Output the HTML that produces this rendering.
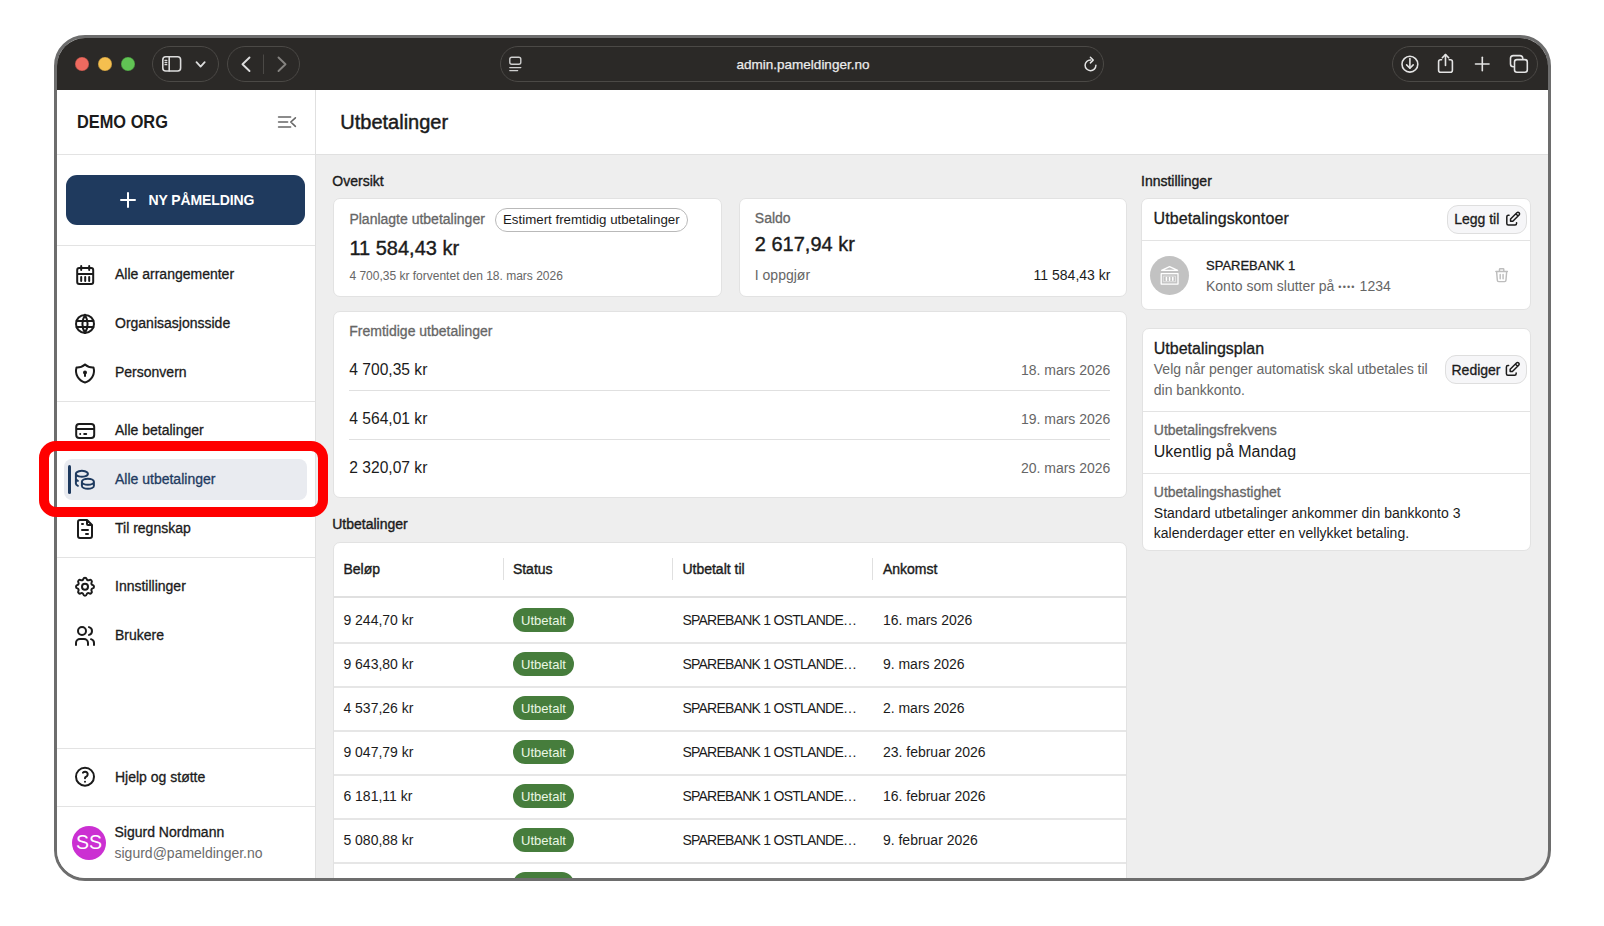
<!DOCTYPE html>
<html><head><meta charset="utf-8">
<style>
*{box-sizing:border-box;margin:0;padding:0}
html,body{width:1604px;height:926px;overflow:hidden;background:#fff;font-family:"Liberation Sans",sans-serif;color:#1f1f1f}
.a{position:absolute;white-space:nowrap;line-height:1}
#win{position:absolute;left:54px;top:35px;width:1497px;height:846px;border:3px solid #6d6d6d;border-radius:31px;overflow:hidden;background:#eeeeee}
#pg{position:absolute;left:-57px;top:-38px;width:1604px;height:926px}
.b{position:absolute}
.hr{position:absolute;left:57px;width:258px;height:1px;background:#e3e3e3}
.card{position:absolute;background:#fff;border:1px solid #e2e2e2;border-radius:7px}
</style></head><body>
<div id="win"><div id="pg">
<div class="b" style="left:57px;top:38px;width:1491px;height:52px;background:#2b2927"></div>
<div class="b" style="left:75px;top:57px;width:14px;height:14px;border-radius:50%;background:#ee6a5f;box-shadow:inset 0 0 0 0.6px rgba(0,0,0,0.22)"></div>
<div class="b" style="left:98px;top:57px;width:14px;height:14px;border-radius:50%;background:#f5bf4f;box-shadow:inset 0 0 0 0.6px rgba(0,0,0,0.22)"></div>
<div class="b" style="left:121px;top:57px;width:14px;height:14px;border-radius:50%;background:#61c454;box-shadow:inset 0 0 0 0.6px rgba(0,0,0,0.22)"></div>
  <svg class="b" style="left:0;top:0" width="1604" height="92" viewBox="0 0 1604 92" fill="none">
    <g stroke="#4b4946" stroke-width="1">
      <rect x="152.5" y="46.5" width="66" height="35" rx="17.5"/>
      <rect x="227.5" y="46.5" width="72" height="35" rx="17.5"/>
      <rect x="500.5" y="46.5" width="603" height="35" rx="17.5"/>
      <rect x="1392.5" y="46.5" width="145" height="35" rx="17.5"/>
    </g>
    <g stroke="#dcdcdc" stroke-width="1.6" stroke-linecap="round" stroke-linejoin="round">
      <rect x="162.8" y="56.8" width="17.8" height="14.2" rx="3"/>
      <line x1="169.2" y1="57" x2="169.2" y2="71"/>
      <path d="M196.5 62.2 L200.6 66.6 L204.7 62.2" stroke-width="1.8"/>
      <path d="M249.5 57.5 L242.5 64.3 L249.5 71" stroke-width="1.9"/>
    </g>
    <g stroke="#dcdcdc" stroke-width="1.3" stroke-linecap="round">
      <line x1="165" y1="60.5" x2="166.8" y2="60.5"/>
      <line x1="165" y1="62.6" x2="166.8" y2="62.6"/>
      <line x1="165" y1="64.7" x2="166.8" y2="64.7"/>
    </g>
    <line x1="263.5" y1="54.5" x2="263.5" y2="74" stroke="#4b4946" stroke-width="1"/>
    <path d="M278.5 57.5 L285.5 64.3 L278.5 71" stroke="#858380" stroke-width="1.9" stroke-linecap="round" stroke-linejoin="round"/>
    <!-- address icon -->
    <g stroke="#cfcfcf" stroke-width="1.4" stroke-linecap="round">
      <rect x="509.8" y="57.3" width="11" height="7" rx="2"/>
      <line x1="509.8" y1="67.6" x2="520.8" y2="67.6"/>
      <line x1="509.8" y1="70.6" x2="517.6" y2="70.6"/>
    </g>
    <!-- reload -->
    <g stroke="#e4e4e4" stroke-width="1.5" stroke-linecap="round" stroke-linejoin="round">
      <path d="M1090.6 59.9 A5.4 5.4 0 1 0 1095.9 65.3"/>
      <path d="M1090.4 57.3 L1093.2 60.1 L1090.4 62.9"/>
    </g>
    <!-- right icons -->
    <g stroke="#e4e4e4" stroke-width="1.6" stroke-linecap="round" stroke-linejoin="round">
      <circle cx="1409.9" cy="64.2" r="7.9"/>
      <line x1="1409.9" y1="58.5" x2="1409.9" y2="68"/>
      <path d="M1406.6 64.9 L1409.9 68.2 L1413.2 64.9"/>
      <path d="M1441.6 59.8 L1440.6 59.8 Q1438.6 59.8 1438.6 61.8 L1438.6 70.2 Q1438.6 72.2 1440.6 72.2 L1450.4 72.2 Q1452.4 72.2 1452.4 70.2 L1452.4 61.8 Q1452.4 59.8 1450.4 59.8 L1449.2 59.8"/>
      <line x1="1445.5" y1="54.6" x2="1445.5" y2="65.4"/>
      <path d="M1442.3 57.8 L1445.5 54.6 L1448.7 57.8"/>
      <line x1="1475.5" y1="64" x2="1489" y2="64"/>
      <line x1="1482.3" y1="57.2" x2="1482.3" y2="70.8"/>
      <path d="M1513.5 66.8 Q1510.5 66.8 1510.5 64 L1510.5 58.3 Q1510.5 55.6 1513.3 55.6 L1520 55.6 Q1522.6 55.6 1522.8 58.5"/>
      <rect x="1514.5" y="59.6" width="12.8" height="12.6" rx="2.4"/>
    </g>
  </svg>
  <div class="a" style="left:700px;width:206px;text-align:center;top:58px;font-size:13.5px;color:#ececec;letter-spacing:0;-webkit-text-stroke:0.25px currentColor">admin.pameldinger.no</div>
<div class="b" style="left:57px;top:90px;width:259px;height:800px;background:#fff;border-right:1px solid #e0e0e0"></div>
<div class="a" style="left:76.9px;top:114.29px;font-size:17.5px;font-weight:bold;color:#1b1b1b;transform:scaleX(0.935);transform-origin:0 0">DEMO ORG</div>
<div class="b" style="left:64px;top:459px;width:243px;height:41px;border-radius:8px;background:#e9ebf0"></div>
<div class="b" style="left:68px;top:465px;width:3px;height:29px;border-radius:2px;background:#1e3a5f"></div>
<svg class="b" style="left:0;top:0" width="330" height="900" fill="none" stroke-linecap="round" stroke-linejoin="round">
  <g stroke="#666" stroke-width="1.6"><path d="M278.6 117h12 M278.6 122h9 M278.6 127h12 M295.4 117.8 L290.8 122 L295.4 126.3"/></g>
  <g stroke="#1b1b1b" stroke-width="2" transform="translate(73.2 263)"><path d="M4 7a2 2 0 0 1 2 -2h12a2 2 0 0 1 2 2v12a2 2 0 0 1 -2 2h-12a2 2 0 0 1 -2 -2v-12z M16 3v4 M8 3v4 M4 11h16 M8 14v4 M12 14v4 M16 14v4"/></g>
  <g stroke="#1b1b1b" stroke-width="2" transform="translate(73 311.9)"><circle cx="12" cy="12" r="9"/><path d="M3.6 9h16.8 M3.6 15h16.8 M12 3 Q6.8 12 12 21 Q17.2 12 12 3"/></g>
  <g stroke="#1b1b1b" stroke-width="2" transform="translate(73 361.5)"><path d="M12 3a12 12 0 0 0 8.5 3a12 12 0 0 1 -8.5 15a12 12 0 0 1 -8.5 -15a12 12 0 0 0 8.5 -3"/><circle cx="12" cy="11" r="1" fill="#1b1b1b"/><path d="M12 12l0 2.5"/></g>
  <g stroke="#1b1b1b" stroke-width="2" transform="translate(73.2 419)"><path d="M3 8a3 3 0 0 1 3 -3h12a3 3 0 0 1 3 3v8a3 3 0 0 1 -3 3h-12a3 3 0 0 1 -3 -3z M3 10l18 0 M7 15l.01 0 M11 15l2 0"/></g>
  <g stroke="#1e3a5f" stroke-width="2" transform="translate(72.9 467.8)"><path d="M9 14c0 1.657 2.686 3 6 3s6 -1.343 6 -3s-2.686 -3 -6 -3s-6 1.343 -6 3z M9 14v4c0 1.656 2.686 3 6 3s6 -1.344 6 -3v-4 M3 6c0 1.072 1.144 2.062 3 2.598s4.144 .536 6 0c1.856 -.536 3 -1.526 3 -2.598c0 -1.072 -1.144 -2.062 -3 -2.598s-4.144 -.536 -6 0c-1.856 .536 -3 1.526 -3 2.598z M3 6v10c0 .888 .772 1.45 2 2 M3 11c0 .888 .772 1.45 2 2"/></g>
  <g stroke="#1b1b1b" stroke-width="2" transform="translate(73 517)"><path d="M14 3v4a1 1 0 0 0 1 1h4 M17 21h-10a2 2 0 0 1 -2 -2v-14a2 2 0 0 1 2 -2h7l5 5v11a2 2 0 0 1 -2 2z M9 7l1 0 M9 13l6 0 M13 17l2 0"/></g>
  <g stroke="#1b1b1b" stroke-width="2" transform="translate(73 574.7)"><path d="M10.325 4.317c.426 -1.756 2.924 -1.756 3.35 0a1.724 1.724 0 0 0 2.573 1.066c1.543 -.94 3.31 .826 2.37 2.37a1.724 1.724 0 0 0 1.065 2.572c1.756 .426 1.756 2.924 0 3.35a1.724 1.724 0 0 0 -1.066 2.573c.94 1.543 -.826 3.31 -2.37 2.37a1.724 1.724 0 0 0 -2.572 1.065c-.426 1.756 -2.924 1.756 -3.35 0a1.724 1.724 0 0 0 -2.573 -1.066c-1.543 .94 -3.31 -.826 -2.37 -2.37a1.724 1.724 0 0 0 -1.065 -2.572c-1.756 -.426 -1.756 -2.924 0 -3.35a1.724 1.724 0 0 0 1.066 -2.573c-.94 -1.543 .826 -3.31 2.37 -2.37c1 .608 2.296 .07 2.572 -1.065z"/><circle cx="12" cy="12" r="3"/></g>
  <g stroke="#1b1b1b" stroke-width="2" transform="translate(73 624)"><path d="M5 7a4 4 0 1 0 8 0a4 4 0 1 0 -8 0 M3 21v-2a4 4 0 0 1 4 -4h4a4 4 0 0 1 4 4v2 M16 3.13a4 4 0 0 1 0 7.75 M21 21v-2a4 4 0 0 0 -3 -3.85"/></g>
  <g stroke="#1b1b1b" stroke-width="2" transform="translate(73 764.7)"><circle cx="12" cy="12" r="9"/><path d="M12 17l0 .01 M12 13.5a1.5 1.5 0 0 1 1 -1.5a2.6 2.6 0 1 0 -3 -4"/></g>
</svg>
<div class="b" style="left:66px;top:175px;width:239px;height:50px;border-radius:11px;background:#1f3a5e"></div>
<svg class="b" style="left:116px;top:188px" width="24" height="24" fill="none" stroke="#fff" stroke-width="2" stroke-linecap="round"><path d="M12 5l0 14 M5 12l14 0"/></svg>
<div class="a" style="left:148.4px;top:193.35px;font-size:14px;font-weight:bold;color:#fff;letter-spacing:-0.1px">NY PÅMELDING</div>
<div class="hr" style="top:154px"></div>
<div class="hr" style="top:245px"></div>
<div class="hr" style="top:401px"></div>
<div class="hr" style="top:557px"></div>
<div class="hr" style="top:748px"></div>
<div class="hr" style="top:806px"></div>
<div class="a" style="left:115px;top:267.45px;font-size:14px;-webkit-text-stroke:0.3px currentColor;color:#1b1b1b">Alle arrangementer</div>
<div class="a" style="left:115px;top:316.25px;font-size:14px;-webkit-text-stroke:0.3px currentColor;color:#1b1b1b">Organisasjonsside</div>
<div class="a" style="left:115px;top:365.15px;font-size:14px;-webkit-text-stroke:0.3px currentColor;color:#1b1b1b">Personvern</div>
<div class="a" style="left:115px;top:422.95px;font-size:14px;-webkit-text-stroke:0.3px currentColor;color:#1b1b1b">Alle betalinger</div>
<div class="a" style="left:115px;top:472.25px;font-size:14px;-webkit-text-stroke:0.3px currentColor;color:#1e3a5f">Alle utbetalinger</div>
<div class="a" style="left:115px;top:521.15px;font-size:14px;-webkit-text-stroke:0.3px currentColor;color:#1b1b1b">Til regnskap</div>
<div class="a" style="left:115px;top:579.15px;font-size:14px;-webkit-text-stroke:0.3px currentColor;color:#1b1b1b">Innstillinger</div>
<div class="a" style="left:115px;top:628.05px;font-size:14px;-webkit-text-stroke:0.3px currentColor;color:#1b1b1b">Brukere</div>
<div class="a" style="left:115px;top:769.95px;font-size:14px;-webkit-text-stroke:0.3px currentColor;color:#1b1b1b">Hjelp og støtte</div>
<div class="b" style="left:72px;top:826px;width:34px;height:34px;border-radius:50%;background:#cb30d2"></div>
<div class="a" style="left:72.0px;width:34px;text-align:center;top:833.29px;font-size:19.5px;color:#fff">SS</div>
<div class="a" style="left:114.5px;top:824.95px;font-size:14px;-webkit-text-stroke:0.3px currentColor;color:#1b1b1b">Sigurd Nordmann</div>
<div class="a" style="left:114.5px;top:846.45px;font-size:14px;color:#6b6b6b">sigurd@pameldinger.no</div>
<div class="b" style="left:316px;top:90px;width:1240px;height:65px;background:#fff;border-bottom:1px solid #e0e0e0"></div>
<div class="a" style="left:340.3px;top:111.97px;font-size:20px;color:#1b1b1b;-webkit-text-stroke:0.45px currentColor">Utbetalinger</div>
<div class="a" style="left:332.3px;top:174.15px;font-size:14px;-webkit-text-stroke:0.38px currentColor;color:#1b1b1b">Oversikt</div>
<div class="card" style="left:333px;top:198px;width:389px;height:99px"></div>
<div class="a" style="left:349.4px;top:212.15px;font-size:14px;-webkit-text-stroke:0.3px currentColor;color:#666666">Planlagte utbetalinger</div>
<div class="b" style="left:495px;top:208px;width:193px;height:24px;border:1px solid #b9b9b9;border-radius:12px"></div>
<div class="a" style="left:503px;top:212.74px;font-size:13.3px;color:#1b1b1b">Estimert fremtidig utbetalinger</div>
<div class="a" style="left:349.4px;top:237.97px;font-size:20px;-webkit-text-stroke:0.38px currentColor;color:#1b1b1b">11 584,43 kr</div>
<div class="a" style="left:349.4px;top:270.14px;font-size:12px;color:#666666">4 700,35 kr forventet den 18. mars 2026</div>
<div class="card" style="left:739px;top:198px;width:388px;height:99px"></div>
<div class="a" style="left:754.8px;top:210.65px;font-size:14px;-webkit-text-stroke:0.3px currentColor;color:#666666">Saldo</div>
<div class="a" style="left:754.8px;top:234.37px;font-size:20px;-webkit-text-stroke:0.38px currentColor;color:#1b1b1b">2 617,94 kr</div>
<div class="a" style="left:754.8px;top:267.65px;font-size:14px;color:#666666">I oppgjør</div>
<div class="a" style="right:493.5999999999999px;top:267.65px;font-size:14px;color:#1b1b1b">11 584,43 kr</div>
<div class="card" style="left:333px;top:311px;width:794px;height:187px"></div>
<div class="a" style="left:349.3px;top:324.45px;font-size:14px;-webkit-text-stroke:0.3px currentColor;color:#666666">Fremtidige utbetalinger</div>
<div class="a" style="left:349.3px;top:361.69px;font-size:15.6px;color:#1b1b1b">4 700,35 kr</div>
<div class="a" style="right:493.5999999999999px;top:363.05px;font-size:14px;color:#666666">18. mars 2026</div>
<div class="a" style="left:349.3px;top:410.79px;font-size:15.6px;color:#1b1b1b">4 564,01 kr</div>
<div class="a" style="right:493.5999999999999px;top:412.15px;font-size:14px;color:#666666">19. mars 2026</div>
<div class="a" style="left:349.3px;top:459.79px;font-size:15.6px;color:#1b1b1b">2 320,07 kr</div>
<div class="a" style="right:493.5999999999999px;top:461.15px;font-size:14px;color:#666666">20. mars 2026</div>
<div class="b" style="left:349px;top:390px;width:761px;height:1px;background:#e0e0e0"></div>
<div class="b" style="left:349px;top:439px;width:761px;height:1px;background:#e0e0e0"></div>
<div class="a" style="left:332.2px;top:517.45px;font-size:14px;-webkit-text-stroke:0.38px currentColor;color:#1b1b1b">Utbetalinger</div>
<div class="card" style="left:333px;top:542px;width:794px;height:400px"></div>
<div class="a" style="left:343.4px;top:562.15px;font-size:14px;-webkit-text-stroke:0.38px currentColor;color:#1b1b1b">Beløp</div>
<div class="a" style="left:512.9px;top:562.15px;font-size:14px;-webkit-text-stroke:0.38px currentColor;color:#1b1b1b">Status</div>
<div class="a" style="left:682.4px;top:562.15px;font-size:14px;-webkit-text-stroke:0.38px currentColor;color:#1b1b1b">Utbetalt til</div>
<div class="a" style="left:882.9px;top:562.15px;font-size:14px;-webkit-text-stroke:0.38px currentColor;color:#1b1b1b">Ankomst</div>
<div class="b" style="left:502.5px;top:558px;width:1.5px;height:22px;background:#e0e0e0"></div>
<div class="b" style="left:671.5px;top:558px;width:1.5px;height:22px;background:#e0e0e0"></div>
<div class="b" style="left:871.5px;top:558px;width:1.5px;height:22px;background:#e0e0e0"></div>
<div class="b" style="left:334px;top:596px;width:792px;height:1.5px;background:#e0e0e0"></div>
<div class="a" style="left:343.4px;top:613.05px;font-size:14px;color:#1b1b1b">9 244,70 kr</div>
<div class="b" style="left:513px;top:608.2px;width:61px;height:24px;border-radius:12px;background:#467d3c"></div>
<div class="a" style="left:513.0px;width:61px;text-align:center;top:614.00px;font-size:13px;color:#eaf7e4">Utbetalt</div>
<div class="a" style="left:682.4px;top:613.05px;font-size:14px;color:#1b1b1b;letter-spacing:-0.75px">SPAREBANK 1 OSTLANDE…</div>
<div class="a" style="left:882.9px;top:613.05px;font-size:14px;color:#1b1b1b">16. mars 2026</div>
<div class="b" style="left:334px;top:642px;width:792px;height:1.5px;background:#e6e6e6"></div>
<div class="a" style="left:343.4px;top:657.05px;font-size:14px;color:#1b1b1b">9 643,80 kr</div>
<div class="b" style="left:513px;top:652.2px;width:61px;height:24px;border-radius:12px;background:#467d3c"></div>
<div class="a" style="left:513.0px;width:61px;text-align:center;top:658.00px;font-size:13px;color:#eaf7e4">Utbetalt</div>
<div class="a" style="left:682.4px;top:657.05px;font-size:14px;color:#1b1b1b;letter-spacing:-0.75px">SPAREBANK 1 OSTLANDE…</div>
<div class="a" style="left:882.9px;top:657.05px;font-size:14px;color:#1b1b1b">9. mars 2026</div>
<div class="b" style="left:334px;top:686px;width:792px;height:1.5px;background:#e6e6e6"></div>
<div class="a" style="left:343.4px;top:701.05px;font-size:14px;color:#1b1b1b">4 537,26 kr</div>
<div class="b" style="left:513px;top:696.2px;width:61px;height:24px;border-radius:12px;background:#467d3c"></div>
<div class="a" style="left:513.0px;width:61px;text-align:center;top:702.00px;font-size:13px;color:#eaf7e4">Utbetalt</div>
<div class="a" style="left:682.4px;top:701.05px;font-size:14px;color:#1b1b1b;letter-spacing:-0.75px">SPAREBANK 1 OSTLANDE…</div>
<div class="a" style="left:882.9px;top:701.05px;font-size:14px;color:#1b1b1b">2. mars 2026</div>
<div class="b" style="left:334px;top:730px;width:792px;height:1.5px;background:#e6e6e6"></div>
<div class="a" style="left:343.4px;top:745.05px;font-size:14px;color:#1b1b1b">9 047,79 kr</div>
<div class="b" style="left:513px;top:740.2px;width:61px;height:24px;border-radius:12px;background:#467d3c"></div>
<div class="a" style="left:513.0px;width:61px;text-align:center;top:746.00px;font-size:13px;color:#eaf7e4">Utbetalt</div>
<div class="a" style="left:682.4px;top:745.05px;font-size:14px;color:#1b1b1b;letter-spacing:-0.75px">SPAREBANK 1 OSTLANDE…</div>
<div class="a" style="left:882.9px;top:745.05px;font-size:14px;color:#1b1b1b">23. februar 2026</div>
<div class="b" style="left:334px;top:774px;width:792px;height:1.5px;background:#e6e6e6"></div>
<div class="a" style="left:343.4px;top:789.05px;font-size:14px;color:#1b1b1b">6 181,11 kr</div>
<div class="b" style="left:513px;top:784.2px;width:61px;height:24px;border-radius:12px;background:#467d3c"></div>
<div class="a" style="left:513.0px;width:61px;text-align:center;top:790.00px;font-size:13px;color:#eaf7e4">Utbetalt</div>
<div class="a" style="left:682.4px;top:789.05px;font-size:14px;color:#1b1b1b;letter-spacing:-0.75px">SPAREBANK 1 OSTLANDE…</div>
<div class="a" style="left:882.9px;top:789.05px;font-size:14px;color:#1b1b1b">16. februar 2026</div>
<div class="b" style="left:334px;top:818px;width:792px;height:1.5px;background:#e6e6e6"></div>
<div class="a" style="left:343.4px;top:833.05px;font-size:14px;color:#1b1b1b">5 080,88 kr</div>
<div class="b" style="left:513px;top:828.2px;width:61px;height:24px;border-radius:12px;background:#467d3c"></div>
<div class="a" style="left:513.0px;width:61px;text-align:center;top:834.00px;font-size:13px;color:#eaf7e4">Utbetalt</div>
<div class="a" style="left:682.4px;top:833.05px;font-size:14px;color:#1b1b1b;letter-spacing:-0.75px">SPAREBANK 1 OSTLANDE…</div>
<div class="a" style="left:882.9px;top:833.05px;font-size:14px;color:#1b1b1b">9. februar 2026</div>
<div class="b" style="left:334px;top:862px;width:792px;height:1.5px;background:#e6e6e6"></div>
<div class="a" style="left:343.4px;top:877.05px;font-size:14px;color:#1b1b1b">7 123,45 kr</div>
<div class="b" style="left:513px;top:872.2px;width:61px;height:24px;border-radius:12px;background:#467d3c"></div>
<div class="a" style="left:513.0px;width:61px;text-align:center;top:878.00px;font-size:13px;color:#eaf7e4">Utbetalt</div>
<div class="a" style="left:682.4px;top:877.05px;font-size:14px;color:#1b1b1b;letter-spacing:-0.75px">SPAREBANK 1 OSTLANDE…</div>
<div class="a" style="left:882.9px;top:877.05px;font-size:14px;color:#1b1b1b">2. februar 2026</div>
<div class="b" style="left:334px;top:906px;width:792px;height:1.5px;background:#e6e6e6"></div>
<div class="a" style="left:1141px;top:173.85px;font-size:14px;-webkit-text-stroke:0.38px currentColor;color:#1b1b1b">Innstillinger</div>
<div class="card" style="left:1141px;top:198px;width:390px;height:112px"></div>
<div class="a" style="left:1153.6px;top:210.66px;font-size:16px;-webkit-text-stroke:0.3px currentColor;color:#1b1b1b;letter-spacing:0.1px">Utbetalingskontoer</div>
<div class="b" style="left:1447px;top:204.5px;width:80px;height:29px;border:1px solid #dedede;border-radius:11px;background:#f6f6f8"></div>
<div class="a" style="left:1454.2px;top:212.15px;font-size:14px;-webkit-text-stroke:0.3px currentColor;color:#1b1b1b">Legg til</div>
<div class="b" style="left:1142px;top:240px;width:388px;height:1px;background:#e3e3e3"></div>
<div class="b" style="left:1150px;top:255.8px;width:39.2px;height:39.2px;border-radius:50%;background:#c2c2c2"></div>
<div class="a" style="left:1206px;top:259.00px;font-size:13px;-webkit-text-stroke:0.3px currentColor;color:#1b1b1b">SPAREBANK 1</div>
<div class="a" style="left:1206px;top:279.15px;font-size:14px;color:#666666">Konto som slutter på <span style="font-size:9px;letter-spacing:1.2px;position:relative;top:-1.5px">••••</span> 1234</div>
<div class="card" style="left:1142px;top:328px;width:389px;height:223px"></div>
<div class="a" style="left:1153.8px;top:340.66px;font-size:16px;-webkit-text-stroke:0.3px currentColor;color:#1b1b1b">Utbetalingsplan</div>
<div class="a" style="left:1153.8px;top:361.85px;font-size:14px;color:#666666">Velg når penger automatisk skal utbetales til</div>
<div class="a" style="left:1153.8px;top:382.55px;font-size:14px;color:#666666">din bankkonto.</div>
<div class="b" style="left:1445px;top:354.7px;width:81.5px;height:29.6px;border:1px solid #dedede;border-radius:11px;background:#f6f6f8"></div>
<div class="a" style="left:1451.5px;top:362.65px;font-size:14px;-webkit-text-stroke:0.3px currentColor;color:#1b1b1b">Rediger</div>
<div class="b" style="left:1143px;top:411px;width:387px;height:1px;background:#e3e3e3"></div>
<div class="a" style="left:1153.8px;top:423.05px;font-size:14px;-webkit-text-stroke:0.3px currentColor;color:#666666">Utbetalingsfrekvens</div>
<div class="a" style="left:1153.8px;top:444.36px;font-size:16px;color:#1b1b1b">Ukentlig på Mandag</div>
<div class="b" style="left:1143px;top:473px;width:387px;height:1px;background:#e3e3e3"></div>
<div class="a" style="left:1153.8px;top:485.15px;font-size:14px;-webkit-text-stroke:0.3px currentColor;color:#666666">Utbetalingshastighet</div>
<div class="a" style="left:1153.8px;top:506.35px;font-size:14px;color:#1b1b1b">Standard utbetalinger ankommer din bankkonto 3</div>
<div class="a" style="left:1153.8px;top:526.15px;font-size:14px;color:#1b1b1b">kalenderdager etter en vellykket betaling.</div>
<svg class="b" style="left:0;top:0" width="1604" height="600" fill="none" stroke-linecap="round" stroke-linejoin="round">
  <g stroke="#1b1b1b" transform="translate(1503.8 210) scale(0.75)"><path d="M7 7h-1a2 2 0 0 0 -2 2v9a2 2 0 0 0 2 2h9a2 2 0 0 0 2 -2v-1 M20.385 6.585a2.1 2.1 0 0 0 -2.97 -2.97l-8.415 8.385v3h3l8.385 -8.415z M16 5l3 3" stroke-width="2"/></g>
  <g stroke="#1b1b1b" transform="translate(1503.4 360.3) scale(0.75)"><path d="M7 7h-1a2 2 0 0 0 -2 2v9a2 2 0 0 0 2 2h9a2 2 0 0 0 2 -2v-1 M20.385 6.585a2.1 2.1 0 0 0 -2.97 -2.97l-8.415 8.385v3h3l8.385 -8.415z M16 5l3 3" stroke-width="2"/></g>
  <g stroke="#bdbdbd" transform="translate(1493 266.5) scale(0.72)"><path d="M4 7l16 0 M10 11l0 6 M14 11l0 6 M5 7l1 12a2 2 0 0 0 2 2h8a2 2 0 0 0 2 -2l1 -12 M9 7v-3a1 1 0 0 1 1 -1h4a1 1 0 0 1 1 1v3" stroke-width="2"/></g>
  <g stroke="#fff" stroke-width="1.3">
    <path d="M1161.6 270.3 L1169.6 266.7 L1177.6 270.3 Z"/>
    <rect x="1161.2" y="273.7" width="16.8" height="10.4"/>
    <rect x="1163.7" y="276.1" width="11.8" height="5.6" stroke-width="0.7" stroke="#eeeeee"/>
    <path d="M1166.4 277.6v2.6 M1169.6 277.6v2.6 M1172.8 277.6v2.6" stroke-width="1.5"/>
  </g>
</svg>
</div></div>
<div class="b" style="left:39px;top:441px;width:289px;height:76px;border:10.5px solid #ff0000;border-radius:17px"></div>
</body></html>
